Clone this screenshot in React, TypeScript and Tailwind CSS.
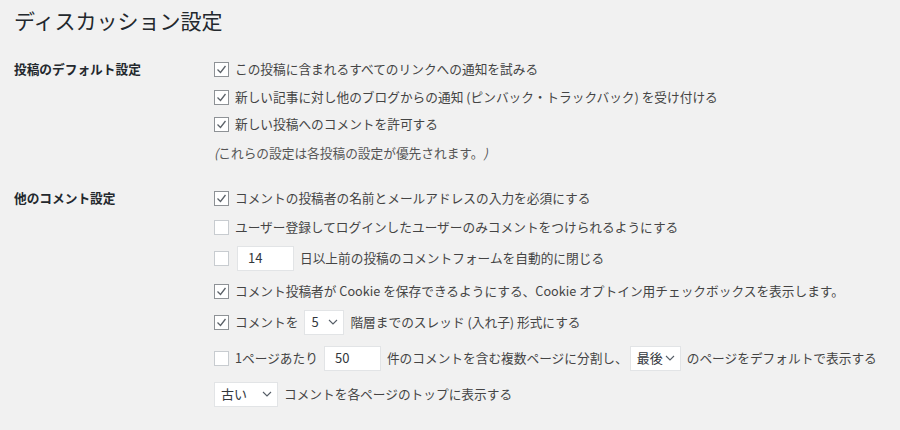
import React from 'react'

const font = { fontFamily: '"Noto Sans CJK JP", "Noto Sans", sans-serif' }

const Check = ({ checked }: { checked?: boolean }) => (
  <span
    className={`inline-flex items-center justify-center w-[15px] h-[15px] shrink-0 bg-white border ${
      checked ? 'border-[#8e9296]' : 'border-[#c8ccd0]'
    }`}
  >
    {checked && (
      <svg width="11" height="11" viewBox="0 0 11 11" fill="none">
        <path d="M1.5 5.5 L4.5 8.5 L9.5 2" stroke="#5b6168" strokeWidth="1.3" />
      </svg>
    )}
  </span>
)

const TextBox = ({ value, width }: { value: string; width: string }) => (
  <span className={`inline-flex items-center h-[25px] ${width} shrink-0 bg-white border border-[#e2e4e6] px-[10px] text-[13px] text-[#32373c]`}>
    {value}
  </span>
)

const Select = ({ value, width }: { value: string; width: string }) => (
  <span className={`inline-flex items-center justify-between h-[25px] ${width} shrink-0 whitespace-nowrap bg-white border border-[#e2e4e6] pl-[6px] pr-[5px] text-[13px] text-[#32373c]`}>
    <span>{value}</span>
    <svg width="10" height="6" viewBox="0 0 10 6" fill="none">
      <path d="M1 1 L5 5 L9 1" stroke="#555d66" strokeWidth="1.1" />
    </svg>
  </span>
)

const Row = ({ children, className = '' }: { children: React.ReactNode; className?: string }) => (
  <div className={`flex items-center gap-[6px] h-[28px] whitespace-nowrap ${className}`}>{children}</div>
)

export default function App() {
  return (
    <div className="w-[900px] h-[430px] bg-[#f1f1f1] text-[#444] overflow-hidden" style={font}>
      <h1 className="pl-[14px] pt-[5px] text-[21px] leading-[30px] text-[#23282d]">ディスカッション設定</h1>

      <div className="grid grid-cols-[214px_1fr] mt-[20px] text-[12.7px]">
        <div className="pl-[14px] h-[28px] flex items-center font-bold text-[#23282d]">投稿のデフォルト設定</div>
        <div className="flex flex-col">
          <Row>
            <Check checked />
            <span>この投稿に含まれるすべてのリンクへの通知を試みる</span>
          </Row>
          <Row>
            <Check checked />
            <span>新しい記事に対し他のブログからの通知 (ピンバック・トラックバック) を受け付ける</span>
          </Row>
          <Row className="-mt-[1px]">
            <Check checked />
            <span>新しい投稿へのコメントを許可する</span>
          </Row>
          <div className="h-[28px] mt-[1px] flex items-center text-[#555]">
            <span className="italic">(</span>これらの設定は各投稿の設定が優先されます。<span className="italic">)</span>
          </div>
        </div>

        <div className="pl-[14px] h-[28px] mt-[17px] flex items-center font-bold text-[#23282d]">他のコメント設定</div>
        <div className="flex flex-col mt-[17px]">
          <Row>
            <Check checked />
            <span>コメントの投稿者の名前とメールアドレスの入力を必須にする</span>
          </Row>
          <Row className="mt-[1px]">
            <Check />
            <span>ユーザー登録してログインしたユーザーのみコメントをつけられるようにする</span>
          </Row>
          <Row className="mt-[3px]">
            <Check />
            <span className="ml-[2px] flex"><TextBox value="14" width="w-[57px]" /></span>
            <span>日以上前の投稿のコメントフォームを自動的に閉じる</span>
          </Row>
          <Row className="mt-[5px]">
            <Check checked />
            <span>コメント投稿者が Cookie を保存できるようにする、Cookie オプトイン用チェックボックスを表示します。</span>
          </Row>
          <Row className="mt-[3px]">
            <Check checked />
            <span>コメントを</span>
            <Select value="5" width="w-[40px]" />
            <span>階層までのスレッド (入れ子) 形式にする</span>
          </Row>
          <Row className="mt-[8px]">
            <Check />
            <span>1ページあたり</span>
            <TextBox value="50" width="w-[57px]" />
            <span>件のコメントを含む複数ページに分割し、</span>
            <span className="-ml-[4px] flex"><Select value="最後" width="w-[51px]" /></span>
            <span>のページをデフォルトで表示する</span>
          </Row>
          <Row className="mt-[8px]">
            <Select value="古い" width="w-[64px]" />
            <span>コメントを各ページのトップに表示する</span>
          </Row>
        </div>
      </div>
    </div>
  )
}
